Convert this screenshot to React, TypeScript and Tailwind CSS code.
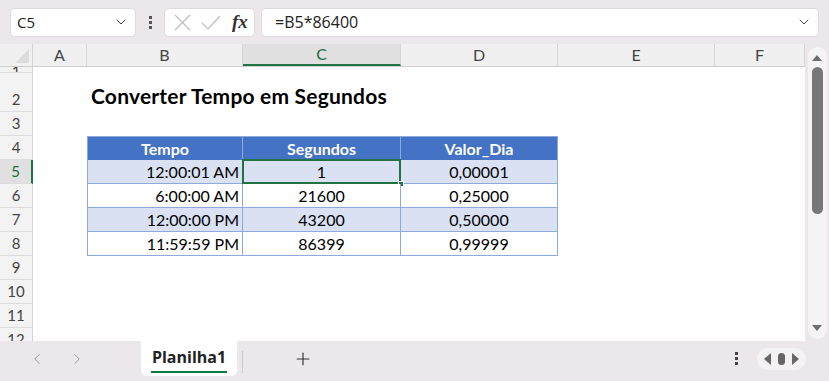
import { ChevronDown, ChevronLeft, ChevronRight, Plus } from "lucide-react";

const cols = [
  { key: "A", w: "w-[54px]" },
  { key: "B", w: "w-[156px]" },
  { key: "C", w: "w-[158px]" },
  { key: "D", w: "w-[157px]" },
  { key: "E", w: "w-[157px]" },
  { key: "F", w: "w-[90px]" },
];

const data = [
  { t: "12:00:01 AM", s: "1", v: "0,00001" },
  { t: "6:00:00 AM", s: "21600", v: "0,25000" },
  { t: "12:00:00 PM", s: "43200", v: "0,50000" },
  { t: "11:59:59 PM", s: "86399", v: "0,99999" },
];

const RowHead = ({ n, h, active }: { n: number; h: string; active?: boolean }) => (
  <div
    className={`w-[33px] ${h} shrink-0 flex items-end justify-center pb-[1px] border-b border-[#dcdcdc] text-[15px] ${
      active ? "bg-[#e0e0e0] text-[#1e6b3f] border-r-2 border-r-[#217346]" : "bg-[#f3f3f3] text-[#444] border-r border-r-[#d4d4d4]"
    }`}
  >
    {n}
  </div>
);

export default function App() {
  return (
    <div className="w-[829px] h-[381px] overflow-hidden bg-[#ece7eb] flex flex-col" style={{ fontFamily: "'Open Sans', 'Noto Sans', sans-serif" }}>
      {/* formula bar */}
      <div className="h-[44px] flex items-center px-[10px] gap-[6px] shrink-0">
        <div className="w-[126px] h-[29px] bg-white rounded-[5px] border border-[#dedade] flex items-center justify-between pl-[6px] pr-[6px] text-[15px] text-[#222]">
          <span>C5</span>
          <ChevronDown size={16} strokeWidth={1.5} className="text-[#444]" />
        </div>
        <div className="w-[16px] flex flex-col items-center gap-[2px]">
          <span className="w-[3px] h-[3px] bg-[#555]" />
          <span className="w-[3px] h-[3px] bg-[#555]" />
          <span className="w-[3px] h-[3px] bg-[#555]" />
        </div>
        <div className="w-[91px] h-[29px] bg-white rounded-[5px] border border-[#dedade] flex items-center pl-[7px] gap-[7px]">
          <svg width="21" height="21" viewBox="0 0 21 21" fill="none" stroke="#bdbdbd" strokeWidth="1.2">
            <path d="M3 3 L18 18 M18 3 L3 18" />
          </svg>
          <svg width="22" height="21" viewBox="0 0 22 21" fill="none" stroke="#bdbdbd" strokeWidth="1.2">
            <path d="M2 11 L8 17 L20 4" />
          </svg>
          <span className="text-[19px] italic text-[#333] font-bold ml-[3px]" style={{ fontFamily: "'Liberation Serif', serif" }}>
            fx
          </span>
        </div>
        <div className="flex-1 h-[29px] bg-white rounded-[5px] border border-[#dedade] flex items-center justify-between pl-[13px] pr-[6px] text-[16px] text-[#222]">
          <span>=B5*86400</span>
          <ChevronDown size={16} strokeWidth={1.5} className="text-[#444]" />
        </div>
      </div>

      {/* sheet */}
      <div className="flex h-[297px] shrink-0 bg-white overflow-hidden">
        <div className="w-[805px] flex flex-col overflow-hidden" style={{ fontFamily: "Lato, 'Open Sans', sans-serif" }}>
          {/* column headers */}
          <div className="flex h-[23px] shrink-0 bg-[#f0f0f0] border-b border-[#d0d0d0]">
            <div className="w-[33px] shrink-0 border-r border-[#d4d4d4] relative">
              <div className="absolute right-[3px] bottom-[3px] w-0 h-0 border-l-[14px] border-l-transparent border-b-[14px] border-b-[#dcdcdc]" />
            </div>
            {cols.map((c) => (
              <div
                key={c.key}
                className={`${c.w} shrink-0 flex items-center justify-center text-[16px] border-r border-[#d6d6d6] ${
                  c.key === "C" ? "bg-[#e0e0e0] text-[#1e6b3f] border-b-2 border-b-[#217346]" : "text-[#444]"
                }`}
              >
                {c.key}
              </div>
            ))}
          </div>

          {/* row 1 (partially hidden) */}
          <div className="flex shrink-0">
            <RowHead n={1} h="h-[6px] overflow-hidden leading-[0px]" />
          </div>

          {/* row 2: title */}
          <div className="flex shrink-0">
            <RowHead n={2} h="h-[39px]" />
            <div className="w-[54px] shrink-0" />
            <div className="pl-[4px] flex items-end pb-[1px] text-[21px] font-bold text-black whitespace-nowrap tracking-[0.2px]" style={{ fontFamily: "Lato, sans-serif" }}>
              Converter Tempo em Segundos
            </div>
          </div>

          <div className="flex shrink-0">
            <RowHead n={3} h="h-[24px]" />
          </div>

          {/* table header */}
          <div className="flex shrink-0">
            <RowHead n={4} h="h-[24px]" />
            <div className="w-[54px] shrink-0" />
            {["Tempo", "Segundos", "Valor_Dia"].map((t, i) => (
              <div
                key={t}
                className={`${["w-[156px]", "w-[158px]", "w-[157px]"][i]} h-[24px] shrink-0 bg-[#4472c4] text-white font-bold text-[16px] flex items-center justify-center border-t border-[#8ea9db] ${
                  i === 0 ? "border-l" : ""
                } border-r border-r-[#8ea9db] border-l-[#8ea9db]`}
              >
                {t}
              </div>
            ))}
          </div>

          {data.map((r, i) => (
            <div key={r.t} className="flex shrink-0">
              <RowHead n={5 + i} h="h-[24px]" active={i === 0} />
              <div className="w-[54px] shrink-0" />
              <div
                className={`w-[156px] h-[24px] shrink-0 flex items-center justify-end pr-[3px] text-[16px] text-black border-l border-r border-b border-[#8ea9db] ${
                  i % 2 === 0 ? "bg-[#d9e1f2]" : "bg-white"
                }`}
              >
                {r.t}
              </div>
              <div
                className={`w-[158px] h-[24px] shrink-0 flex items-center justify-center text-[16px] text-black border-r border-b border-[#8ea9db] relative ${
                  i % 2 === 0 ? "bg-[#d9e1f2]" : "bg-white"
                }`}
              >
                {r.s}
                {i === 0 && (
                  <>
                    <div className="absolute -left-[1px] -top-[1px] -right-[1px] -bottom-[1px] border-2 border-[#217346]" />
                    <div className="absolute -right-[4px] -bottom-[4px] w-[6px] h-[6px] bg-[#217346] border border-white" />
                  </>
                )}
              </div>
              <div
                className={`w-[157px] h-[24px] shrink-0 flex items-center justify-center text-[16px] text-black border-r border-b border-[#8ea9db] ${
                  i % 2 === 0 ? "bg-[#d9e1f2]" : "bg-white"
                }`}
              >
                {r.v}
              </div>
            </div>
          ))}

          {[9, 10, 11, 12].map((n) => (
            <div key={n} className="flex shrink-0">
              <RowHead n={n} h="h-[24px]" />
            </div>
          ))}
        </div>

        {/* vertical scrollbar */}
        <div className="w-[24px] bg-[#ece7eb] flex justify-center pt-[3px] pb-[2px]">
          <div className="w-[19px] h-full bg-[#f4f4f4] rounded-full flex flex-col items-center pt-[8px] pb-[8px]">
            <div className="w-0 h-0 border-l-[5px] border-r-[5px] border-b-[6px] border-l-transparent border-r-transparent border-b-[#6e6e6e]" />
            <div className="w-[11px] h-[147px] bg-[#777] rounded-full mt-[6px]" />
            <div className="flex-1" />
            <div className="w-0 h-0 border-l-[5px] border-r-[5px] border-t-[6px] border-l-transparent border-r-transparent border-t-[#6e6e6e]" />
          </div>
        </div>
      </div>

      {/* sheet tabs */}
      <div className="flex-1 flex items-start">
        <div className="w-[141px] h-[35px] flex items-center gap-[22px] pl-[28px]">
          <ChevronLeft size={18} strokeWidth={1.3} className="text-[#9a9a9a]" />
          <ChevronRight size={18} strokeWidth={1.3} className="text-[#9a9a9a]" />
        </div>
        <div className="w-[96px] h-[35px] bg-white rounded-b-[6px] flex flex-col items-center justify-center">
          <span className="text-[16px] font-bold text-[#222] leading-[20px] mt-[2px]" style={{ fontFamily: "'Open Sans', sans-serif" }}>
            Planilha1
          </span>
          <span className="w-[76px] h-[2px] bg-[#107c41] mt-[4px]" />
        </div>
        <div className="w-[1px] h-[22px] bg-[#cfcacd] mt-[10px] ml-[5px]" />
        <div className="w-[120px] h-[35px] flex items-center justify-center">
          <Plus size={20} strokeWidth={1.4} className="text-[#333]" />
        </div>
        <div className="flex-1" />
        <div className="h-[35px] flex flex-col justify-center gap-[2px] mr-[19px]">
          <span className="w-[3px] h-[3px] bg-[#444]" />
          <span className="w-[3px] h-[3px] bg-[#444]" />
          <span className="w-[3px] h-[3px] bg-[#444]" />
        </div>
        <div className="h-[22px] w-[49px] mt-[7px] mr-[23px] bg-[#f4f2f3] rounded-full flex items-center justify-center gap-[7px]">
          <div className="w-0 h-0 border-t-[6px] border-b-[6px] border-r-[7px] border-t-transparent border-b-transparent border-r-[#666]" />
          <div className="w-[7px] h-[12px] bg-[#666] rounded-full" />
          <div className="w-0 h-0 border-t-[6px] border-b-[6px] border-l-[7px] border-t-transparent border-b-transparent border-l-[#666]" />
        </div>
      </div>
    </div>
  );
}
